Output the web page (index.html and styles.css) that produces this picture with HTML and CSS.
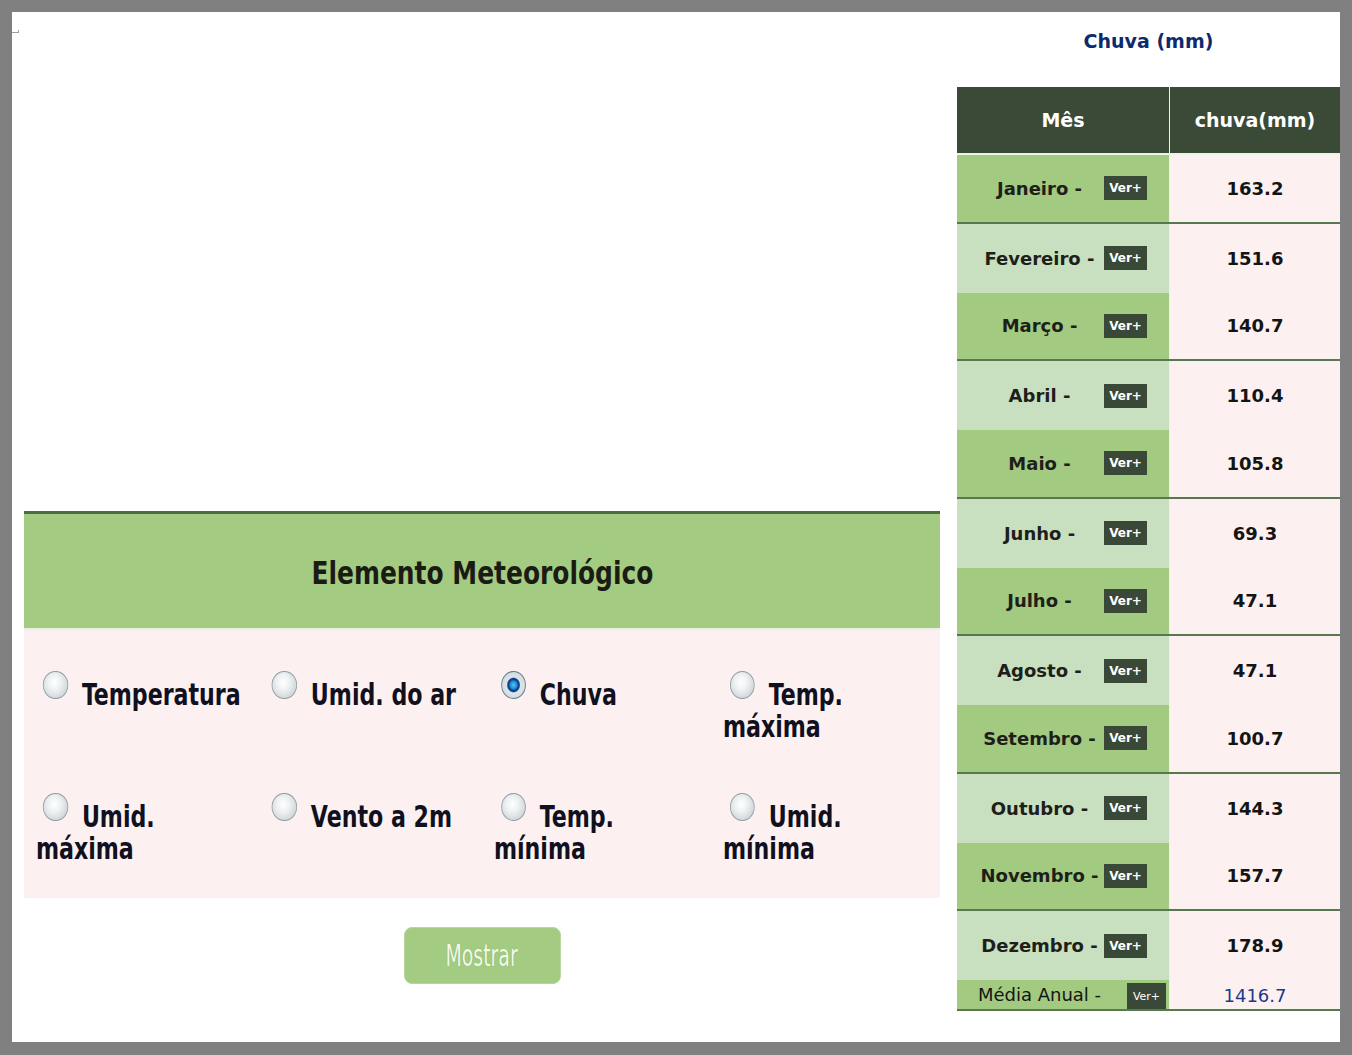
FILE: index.html
```html
<!DOCTYPE html>
<html lang="pt">
<head>
<meta charset="utf-8">
<title>Chuva (mm)</title>
<link rel="stylesheet" href="styles.css">
</head>
<body>
<div class="frame">
  <div class="left">
    <span class="mark"></span>
    <div class="panel">
      <div class="panel-head"><span class="narrow-title">Elemento Meteorológico</span></div>
      <div class="options">
        <div class="opts-grid">
          <label class="opt"><input type="radio" name="el">Temperatura</label>
          <label class="opt"><input type="radio" name="el">Umid. do ar</label>
          <label class="opt"><input type="radio" name="el" checked>Chuva</label>
          <label class="opt"><input type="radio" name="el">Temp. máxima</label>
          <label class="opt"><input type="radio" name="el">Umid. máxima</label>
          <label class="opt"><input type="radio" name="el">Vento a 2m</label>
          <label class="opt"><input type="radio" name="el">Temp. mínima</label>
          <label class="opt"><input type="radio" name="el">Umid. mínima</label>
        </div>
      </div>
    </div>
    <div class="actions"><button class="show"><span class="show-label">Mostrar</span></button></div>
  </div>
  <div class="right">
    <div class="title">Chuva (mm)</div>
    <div class="table">
      <div class="row head"><div class="hc">Mês</div><div class="hc">chuva(mm)</div></div>
      <div class="row dark"><div class="mc"><span class="mn">Janeiro -</span><span class="ver">Ver+</span></div><div class="vc">163.2</div></div>
      <div class="row light"><div class="mc"><span class="mn">Fevereiro -</span><span class="ver">Ver+</span></div><div class="vc">151.6</div></div>
      <div class="row dark"><div class="mc"><span class="mn">Março -</span><span class="ver">Ver+</span></div><div class="vc">140.7</div></div>
      <div class="row light"><div class="mc"><span class="mn">Abril -</span><span class="ver">Ver+</span></div><div class="vc">110.4</div></div>
      <div class="row dark"><div class="mc"><span class="mn">Maio -</span><span class="ver">Ver+</span></div><div class="vc">105.8</div></div>
      <div class="row light"><div class="mc"><span class="mn">Junho -</span><span class="ver">Ver+</span></div><div class="vc">69.3</div></div>
      <div class="row dark"><div class="mc"><span class="mn">Julho -</span><span class="ver">Ver+</span></div><div class="vc">47.1</div></div>
      <div class="row light"><div class="mc"><span class="mn">Agosto -</span><span class="ver">Ver+</span></div><div class="vc">47.1</div></div>
      <div class="row dark"><div class="mc"><span class="mn">Setembro -</span><span class="ver">Ver+</span></div><div class="vc">100.7</div></div>
      <div class="row light"><div class="mc"><span class="mn">Outubro -</span><span class="ver">Ver+</span></div><div class="vc">144.3</div></div>
      <div class="row dark"><div class="mc"><span class="mn">Novembro -</span><span class="ver">Ver+</span></div><div class="vc">157.7</div></div>
      <div class="row light"><div class="mc"><span class="mn">Dezembro -</span><span class="ver">Ver+</span></div><div class="vc">178.9</div></div>
      <div class="row avg"><div class="mc"><span class="an">Média Anual -</span><span class="ver small">Ver+</span></div><div class="vc av">1416.7</div></div>
    </div>
  </div>
</div>
</body>
</html>
```
FILE: styles.css
```css
html, body { margin: 0; padding: 0; }
body {
  background: #808080;
  padding: 12px 12px 13px 12px;
  width: 1328px;
  height: 1030px;
}
.frame {
  width: 1328px;
  height: 1030px;
  background: #ffffff;
  display: flex;
  gap: 17px;
}
.left {
  width: 928px;
  display: flex;
  flex-direction: column;
}
.mark {
  display: block;
  width: 6px;
  height: 2px;
  margin-top: 18px;
  border-right: 1px solid #8fa6a4;
  border-bottom: 1px solid #8fa6a4;
}
.panel {
  margin-left: 12px;
  margin-top: 478px;
  width: 916px;
}
.panel-head {
  box-sizing: border-box;
  height: 119px;
  border-top: 3px solid #4c6b3e;
  border-bottom: 2px solid #e8f0e0;
  background: #a3cb82;
  display: flex;
  align-items: center;
  justify-content: center;
  padding-top: 4px;
  font-family: "DejaVu Sans Condensed", "DejaVu Sans", sans-serif;
  font-weight: bold;
  font-size: 32px;
  color: #1b1b14;
}
.narrow-title {
  display: inline-block;
  white-space: nowrap;
  transform: scaleX(0.866);
}
.options {
  background: #fcf1f0;
  overflow: hidden;
  padding: 49px 0 33px 0;
}
.opts-grid {
  width: 1117px;
  display: grid;
  grid-template-columns: repeat(4, 279.25px);
  row-gap: 58px;
  transform: scaleX(0.82);
  transform-origin: 0 0;
}
.opt {
  padding: 0 6px 0 14.6px;
  font-family: "DejaVu Sans Condensed", "DejaVu Sans", sans-serif;
  font-weight: bold;
  font-size: 30px;
  line-height: 32px;
  color: #10101e;
}
.opt input {
  appearance: none;
  -webkit-appearance: none;
  width: 30.5px;
  height: 28px;
  margin: -10px 17px 0 8.5px;
  border: 1px solid #8e9ca2;
  border-radius: 50%;
  box-sizing: border-box;
  vertical-align: 6px;
  background: radial-gradient(circle at 45% 40%, #ffffff 0, #eef1f2 35%, #cfd6d9 75%, #b3bec3 100%);
}
.opt input:checked {
  border-color: #5a7688;
  background: radial-gradient(ellipse at 50% 50%, #5ec0f0 0, #1f8ed6 4px, #0b3f86 6px, #0b3f86 7px, #dfe6ea 8.5px, #c6d0d5 100%);
}
.actions {
  margin-left: 12px;
  width: 916px;
  display: flex;
  justify-content: center;
  padding-top: 29px;
}
.show {
  width: 157px;
  height: 57px;
  background: #a3cb82;
  border: 1px solid #b6d69c;
  border-radius: 8px;
  font-family: "DejaVu Sans Condensed", "DejaVu Sans", sans-serif;
  font-size: 30px;
  color: #f2fae8;
  padding: 0;
  text-shadow: 0 0 1px #6f9a52;
}
.show-label {
  display: inline-block;
  transform: scaleX(0.7);
}
.right {
  width: 383px;
  display: flex;
  flex-direction: column;
  font-family: "DejaVu Sans", Verdana, sans-serif;
}
.title {
  margin-top: 17px;
  height: 24px;
  line-height: 24px;
  text-align: center;
  font-weight: bold;
  font-size: 19px;
  color: #0c2b6e;
}
.table {
  margin-top: 34px;
  display: flex;
  flex-direction: column;
  background: #eef3ea;
}
.row {
  display: grid;
  grid-template-columns: 212px 170px;
  column-gap: 1px;
  box-sizing: border-box;
  height: 68.75px;
}
.row.head {
  height: 66px;
  margin-bottom: 2px;
}
.hc {
  background: #3b4a37;
  color: #ffffff;
  font-weight: bold;
  font-size: 19px;
  display: flex;
  align-items: center;
  justify-content: center;
}
.mc {
  display: grid;
  grid-template-columns: 129px 43px;
  align-items: center;
  padding-left: 18px;
}
.row.dark .mc, .row.avg .mc { background: #a2ca80; }
.row.light .mc { background: #c8e0c0; }
.row.dark { border-bottom: 2px solid #587850; }
.row.avg { border-bottom: 2px solid #587850; height: 31px; }
.mn {
  text-align: center;
  font-weight: bold;
  font-size: 18px;
  color: #1e1e1a;
  white-space: nowrap;
}
.an {
  text-align: center;
  font-size: 18px;
  color: #141414;
  white-space: nowrap;
}
.row.avg .mc { grid-template-columns: 129px 39px; column-gap: 23px; }
.ver {
  width: 43px;
  height: 24px;
  background: #3a4838;
  color: #ffffff;
  font-weight: bold;
  font-size: 12px;
  line-height: 25px;
  text-align: center;
  justify-self: start;
}
.ver.small {
  width: 39px;
  height: 26px;
  line-height: 28px;
  font-size: 11px;
  font-weight: normal;
  align-self: end;
}
.vc {
  background: #fcf1f0;
  display: flex;
  align-items: center;
  justify-content: center;
  font-weight: bold;
  font-size: 18px;
  color: #141414;
}
.vc.av { font-weight: normal; font-size: 18px; color: #1a3a8a; padding-top: 2px; }
```
